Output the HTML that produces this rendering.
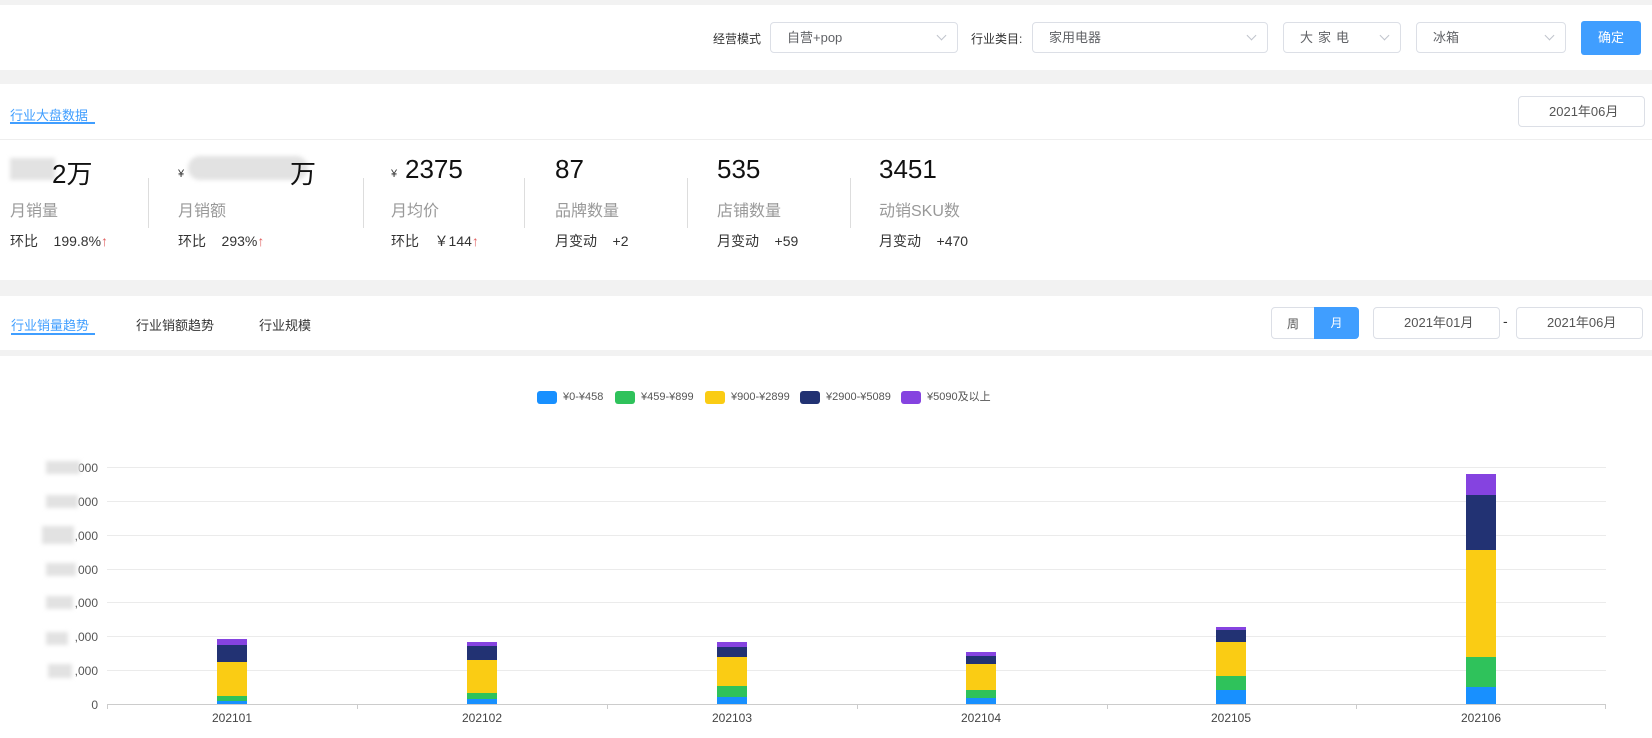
<!DOCTYPE html>
<html><head><meta charset="utf-8"><style>
*{margin:0;padding:0;box-sizing:border-box}
body{width:1652px;height:738px;background:#f2f2f2;font-family:"Liberation Sans","Noto Sans CJK SC",sans-serif;position:relative;overflow:hidden;color:#333}
.abs{position:absolute}
.w{background:#fff;position:absolute;left:0;width:1652px}
.sel{position:absolute;border:1px solid #dcdfe6;border-radius:4px;height:31px;background:#fff;font-size:13px;color:#606266;line-height:29px;padding-left:16px;white-space:nowrap}
.sel i{position:absolute;right:12px;top:9px;width:7px;height:7px;border-right:1px solid #c0c4cc;border-bottom:1px solid #c0c4cc;transform:rotate(45deg)}
.lbl{position:absolute;font-size:12px;color:#333;white-space:nowrap}
.val{position:absolute;font-size:26px;color:#111;top:154px}
.sub{position:absolute;font-size:16px;color:#999;top:197px}
.chg{position:absolute;font-size:14px;color:#333;top:231px}
.sep{position:absolute;top:178px;width:1px;height:50px;background:#ddd}
.up{color:#e06060}
.grid{position:absolute;left:107px;width:1499px;height:1px;background:#ebebeb}
.ylab{position:absolute;right:1554px;font-size:12px;color:#555;width:60px;text-align:right}
.xlab{position:absolute;top:711px;font-size:12px;color:#444;width:80px;text-align:center}
.leg{position:absolute;top:391px;font-size:11px;color:#555;line-height:13px;white-space:nowrap}
.leg b{display:inline-block;width:20px;height:13px;border-radius:3px;vertical-align:top;margin-right:6px}
.blur{position:absolute;background:#e2e2e2;filter:blur(2px)}
</style></head><body>
<div class="w" style="top:5px;height:65px"></div>
<div class="lbl" style="left:713px;top:30px">经营模式</div>
<div class="sel" style="left:770px;top:22px;width:188px">自营+pop<i></i></div>
<div class="lbl" style="left:971px;top:30px">行业类目:</div>
<div class="sel" style="left:1032px;top:22px;width:236px">家用电器<i></i></div>
<div class="sel" style="left:1283px;top:22px;width:118px;letter-spacing:5px">大家电<i></i></div>
<div class="sel" style="left:1416px;top:22px;width:150px">冰箱<i></i></div>
<div class="abs" style="left:1581px;top:21px;width:60px;height:34px;background:#409eff;border-radius:3px;color:#fff;font-size:13px;text-align:center;line-height:34px">确定</div>

<div class="w" style="top:84px;height:196px"></div>
<div class="abs" style="left:10px;top:105px;font-size:13px;color:#409eff">行业大盘数据</div>
<div class="abs" style="left:10px;top:122px;width:85px;height:2px;background:#409eff"></div>
<div class="abs" style="left:0;top:139px;width:1652px;height:1px;background:#eee"></div>
<div class="sel" style="left:1518px;top:96px;width:127px;padding-left:30px;color:#555">2021年06月</div>

<div class="blur" style="left:10px;top:158px;width:45px;height:22px"></div>
<div class="val" style="left:52px">2万</div>
<div class="abs" style="left:178px;top:168px;font-size:11px">¥</div>
<div class="blur" style="left:188px;top:156px;width:120px;height:24px;border-radius:12px"></div>
<div class="val" style="left:290px">万</div>
<div class="abs" style="left:391px;top:168px;font-size:11px">¥</div>
<div class="val" style="left:405px">2375</div>
<div class="val" style="left:555px">87</div>
<div class="val" style="left:717px">535</div>
<div class="val" style="left:879px">3451</div>
<div class="sub" style="left:10px">月销量</div>
<div class="sub" style="left:178px">月销额</div>
<div class="sub" style="left:391px">月均价</div>
<div class="sub" style="left:555px">品牌数量</div>
<div class="sub" style="left:717px">店铺数量</div>
<div class="sub" style="left:879px">动销SKU数</div>
<div class="chg" style="left:10px">环比&nbsp;&nbsp;&nbsp;&nbsp;199.8%<span class="up">↑</span></div>
<div class="chg" style="left:178px">环比&nbsp;&nbsp;&nbsp;&nbsp;293%<span class="up">↑</span></div>
<div class="chg" style="left:391px">环比&nbsp;&nbsp;&nbsp;&nbsp;￥144<span class="up">↑</span></div>
<div class="chg" style="left:555px">月变动&nbsp;&nbsp;&nbsp;&nbsp;+2</div>
<div class="chg" style="left:717px">月变动&nbsp;&nbsp;&nbsp;&nbsp;+59</div>
<div class="chg" style="left:879px">月变动&nbsp;&nbsp;&nbsp;&nbsp;+470</div>
<div class="sep" style="left:148px"></div><div class="sep" style="left:363px"></div><div class="sep" style="left:524px"></div><div class="sep" style="left:687px"></div><div class="sep" style="left:850px"></div>

<div class="w" style="top:296px;height:54px"></div>
<div class="abs" style="left:11px;top:315px;font-size:13px;color:#409eff">行业销量趋势</div>
<div class="abs" style="left:11px;top:333px;width:84px;height:2px;background:#409eff"></div>
<div class="abs" style="left:136px;top:315px;font-size:13px">行业销额趋势</div>
<div class="abs" style="left:259px;top:315px;font-size:13px">行业规模</div>
<div class="abs" style="left:1271px;top:307px;width:88px;height:32px;border:1px solid #dcdfe6;border-radius:4px;background:#fff"></div>
<div class="abs" style="left:1271px;top:315px;width:44px;text-align:center;font-size:12px;color:#555">周</div>
<div class="abs" style="left:1314px;top:307px;width:45px;height:32px;background:#409eff;border-radius:0 4px 4px 0;color:#fff;font-size:12px;text-align:center;line-height:32px">月</div>
<div class="sel" style="left:1373px;top:307px;width:127px;height:32px;padding-left:30px;color:#555">2021年01月</div>
<div class="abs" style="left:1503px;top:313px;font-size:14px">-</div>
<div class="sel" style="left:1516px;top:307px;width:127px;height:32px;padding-left:30px;color:#555">2021年06月</div>

<div class="w" style="top:356px;height:382px"></div>
<div class="leg" style="left:537px"><b style="background:#1890ff"></b>¥0-¥458</div>
<div class="leg" style="left:615px"><b style="background:#2fc25b"></b>¥459-¥899</div>
<div class="leg" style="left:705px"><b style="background:#facc14"></b>¥900-¥2899</div>
<div class="leg" style="left:800px"><b style="background:#223273"></b>¥2900-¥5089</div>
<div class="leg" style="left:901px"><b style="background:#8543e0"></b>¥5090及以上</div>

<div class="grid" style="top:467px"></div><div class="grid" style="top:501px"></div><div class="grid" style="top:535px"></div><div class="grid" style="top:569px"></div><div class="grid" style="top:602px"></div><div class="grid" style="top:636px"></div><div class="grid" style="top:670px"></div>
<div class="grid" style="top:704px;background:#ccc"></div>
<div class="ylab" style="top:461px">000</div><div class="ylab" style="top:495px">000</div><div class="ylab" style="top:529px">,000</div><div class="ylab" style="top:563px">000</div><div class="ylab" style="top:596px">,000</div><div class="ylab" style="top:630px">,000</div><div class="ylab" style="top:664px">,000</div><div class="ylab" style="top:698px">0</div>
<div class="blur" style="left:46px;top:461px;width:34px;height:13px"></div>
<div class="blur" style="left:46px;top:495px;width:32px;height:13px"></div>
<div class="blur" style="left:42px;top:526px;width:32px;height:18px"></div>
<div class="blur" style="left:46px;top:563px;width:30px;height:13px"></div>
<div class="blur" style="left:46px;top:596px;width:27px;height:13px"></div>
<div class="blur" style="left:46px;top:632px;width:22px;height:13px"></div>
<div class="blur" style="left:48px;top:664px;width:24px;height:14px"></div>

<svg class="abs" style="left:0;top:0" width="1652" height="738">
<g stroke="#ccc"><line x1="107.5" y1="704" x2="107.5" y2="709"/><line x1="357.5" y1="704" x2="357.5" y2="709"/><line x1="607.5" y1="704" x2="607.5" y2="709"/><line x1="857.5" y1="704" x2="857.5" y2="709"/><line x1="1107.5" y1="704" x2="1107.5" y2="709"/><line x1="1356.5" y1="704" x2="1356.5" y2="709"/><line x1="1605.5" y1="704" x2="1605.5" y2="709"/></g>
<g>
<rect x="217" y="639" width="30" height="6" fill="#8543e0"/><rect x="217" y="645" width="30" height="17" fill="#223273"/><rect x="217" y="662" width="30" height="34" fill="#facc14"/><rect x="217" y="696" width="30" height="5" fill="#2fc25b"/><rect x="217" y="701" width="30" height="3" fill="#1890ff"/>
<rect x="467" y="642" width="30" height="4" fill="#8543e0"/><rect x="467" y="646" width="30" height="14" fill="#223273"/><rect x="467" y="660" width="30" height="33" fill="#facc14"/><rect x="467" y="693" width="30" height="6" fill="#2fc25b"/><rect x="467" y="699" width="30" height="5" fill="#1890ff"/>
<rect x="717" y="642" width="30" height="5" fill="#8543e0"/><rect x="717" y="647" width="30" height="10" fill="#223273"/><rect x="717" y="657" width="30" height="29" fill="#facc14"/><rect x="717" y="686" width="30" height="11" fill="#2fc25b"/><rect x="717" y="697" width="30" height="7" fill="#1890ff"/>
<rect x="966" y="652" width="30" height="4" fill="#8543e0"/><rect x="966" y="656" width="30" height="8" fill="#223273"/><rect x="966" y="664" width="30" height="26" fill="#facc14"/><rect x="966" y="690" width="30" height="8" fill="#2fc25b"/><rect x="966" y="698" width="30" height="6" fill="#1890ff"/>
<rect x="1216" y="627" width="30" height="3" fill="#8543e0"/><rect x="1216" y="630" width="30" height="12" fill="#223273"/><rect x="1216" y="642" width="30" height="34" fill="#facc14"/><rect x="1216" y="676" width="30" height="14" fill="#2fc25b"/><rect x="1216" y="690" width="30" height="14" fill="#1890ff"/>
<rect x="1466" y="474" width="30" height="21" fill="#8543e0"/><rect x="1466" y="495" width="30" height="55" fill="#223273"/><rect x="1466" y="550" width="30" height="107" fill="#facc14"/><rect x="1466" y="657" width="30" height="30" fill="#2fc25b"/><rect x="1466" y="687" width="30" height="17" fill="#1890ff"/>
</g></svg>
<div class="xlab" style="left:192px">202101</div>
<div class="xlab" style="left:442px">202102</div>
<div class="xlab" style="left:692px">202103</div>
<div class="xlab" style="left:941px">202104</div>
<div class="xlab" style="left:1191px">202105</div>
<div class="xlab" style="left:1441px">202106</div>
</body></html>
